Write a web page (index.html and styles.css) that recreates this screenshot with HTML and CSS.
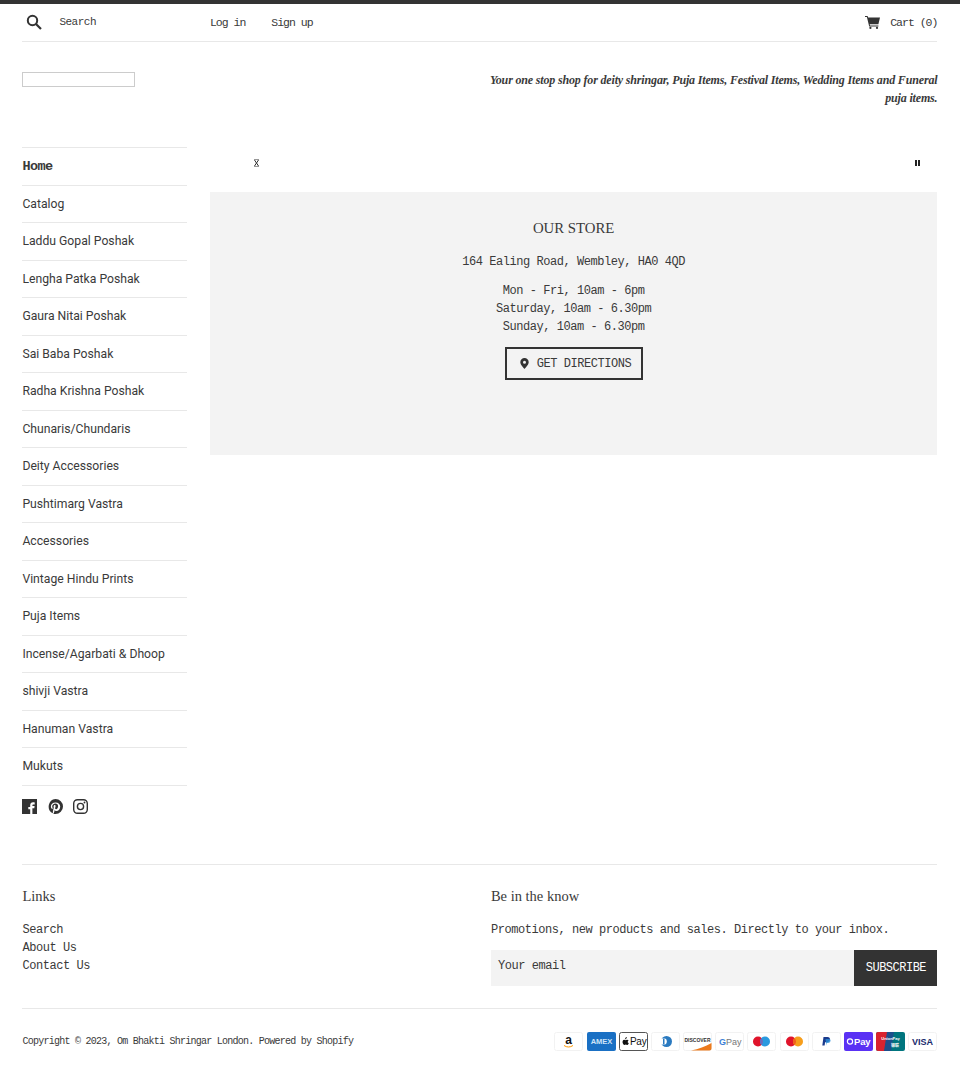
FILE: index.html
```html
<!DOCTYPE html>
<html lang="en">
<head>
    <meta charset="UTF-8">
    <meta name="viewport" content="width=device-width, initial-scale=1.0">
    <title>Om Bhakti Shringar London</title>
    <link rel="stylesheet" href="styles.css">
</head>
<body>
    <div class="page">
        <header class="top-bar">
            <div class="top-search">
                <svg class="icon-search" viewBox="0 0 16 16" width="16" height="16"><circle cx="6.5" cy="6.5" r="4.7" fill="none" stroke="#333" stroke-width="2"/><path d="M10 10l5 5" stroke="#333" stroke-width="2.2" fill="none"/></svg>
                <span class="search-text">Search</span>
            </div>
            <div class="top-account">
                <a href="#">Log in</a>
                <a href="#">Sign up</a>
            </div>
            <a class="top-cart" href="#">
                <svg viewBox="0 0 15 13" width="15" height="13"><path d="M0 0h2.6l.5 1.6H15l-1.6 6.6H4.7l.3 1.2h8.4v1H4.2L1.9 1H0z" fill="#333"/><circle cx="5.4" cy="11.9" r="1.1" fill="#333"/><circle cx="12" cy="11.9" r="1.1" fill="#333"/></svg>
                <span>Cart (0)</span>
            </a>
        </header>

        <div class="brand">
            <div class="logo-box"></div>
            <p class="tagline">Your one stop shop for deity shringar, Puja Items, Festival Items, Wedding Items and Funeral puja items.</p>
        </div>

        <div class="layout">
            <aside class="sidebar">
                <ul class="side-nav">
                    <li class="active"><a href="#">Home</a></li>
                    <li><a href="#">Catalog</a></li>
                    <li><a href="#">Laddu Gopal Poshak</a></li>
                    <li><a href="#">Lengha Patka Poshak</a></li>
                    <li><a href="#">Gaura Nitai Poshak</a></li>
                    <li><a href="#">Sai Baba Poshak</a></li>
                    <li><a href="#">Radha Krishna Poshak</a></li>
                    <li><a href="#">Chunaris/Chundaris</a></li>
                    <li><a href="#">Deity Accessories</a></li>
                    <li><a href="#">Pushtimarg Vastra</a></li>
                    <li><a href="#">Accessories</a></li>
                    <li><a href="#">Vintage Hindu Prints</a></li>
                    <li><a href="#">Puja Items</a></li>
                    <li><a href="#">Incense/Agarbati &amp; Dhoop</a></li>
                    <li><a href="#">shivji Vastra</a></li>
                    <li><a href="#">Hanuman Vastra</a></li>
                    <li><a href="#">Mukuts</a></li>
                </ul>
                <div class="social">
                    <svg viewBox="0 0 15 15" width="15" height="15"><path d="M0 0h15v15h-4.600v-5.800h1.900l.3-2.200h-2.200V6.500c0-.7.2-1.100 1.100-1.100h1.200V3.400c-.2 0-.9-.1-1.700-.1-1.700 0-2.800 1-2.800 2.900V8H6.300v2.200h1.900V15H0z" fill="#333"/></svg>
                    <svg viewBox="0 0 15 15" width="15" height="15"><path fill-rule="evenodd" d="M7.500 0a7.500 7.500 0 1 1 0 15 7.500 7.500 0 0 1-2.200-.3c.3-.5.700-1.200.9-1.800l.5-1.800c.2.500.9 1 1.700 1 2.200 0 3.800-2 3.800-4.500C12.200 5.200 10.300 3.400 7.700 3.400 4.500 3.400 2.900 5.600 2.900 7.400c0 1.100.4 2.100 1.300 2.500.2.100.3 0 .3-.2l.2-.6c0-.2 0-.3-.1-.4-.3-.3-.4-.7-.4-1.300 0-1.600 1.200-3 3.200-3 1.700 0 2.700 1 2.700 2.500 0 1.800-.8 3.400-2 3.400-.7 0-1.200-.6-1-1.200.2-.8.5-1.600.5-2.200 0-.5-.3-.9-.8-.9-.7 0-1.200.7-1.200 1.600 0 .6.200 1 .2 1l-.8 3.500c-.2.700-.1 1.700-.1 2.100A7.500 7.500 0 0 1 7.500 0z" fill="#333"/></svg>
                    <svg viewBox="0 0 15 15" width="15" height="15"><rect x=".7" y=".7" width="13.600" height="13.600" rx="3.800" fill="none" stroke="#333" stroke-width="1.400"/><circle cx="7.500" cy="7.500" r="3.100" fill="none" stroke="#333" stroke-width="1.400"/><circle cx="11.500" cy="3.500" r=".9" fill="#333"/></svg>
                </div>
            </aside>

            <main class="main">
                <div class="slide-controls">
                    <svg viewBox="0 0 5 8" width="5" height="8"><path d="M0 0h5M0 8h5M.5 1l4 6M4.500 1l-4 6" stroke="#333" stroke-width="1" fill="none"/></svg>
                    <svg viewBox="0 0 5 6" width="5" height="6"><path d="M0 0h2v6H0zM3 0h2v6H3z" fill="#222"/></svg>
                </div>
                <section class="store">
                    <h2 class="store-title">OUR STORE</h2>
                    <p class="store-address">164 Ealing Road, Wembley, HA0 4QD</p>
                    <p class="store-hours">Mon - Fri, 10am - 6pm<br>Saturday, 10am - 6.30pm<br>Sunday, 10am - 6.30pm</p>
                    <a class="btn-directions" href="#">
                        <svg viewBox="0 0 9 11" width="9" height="11"><path fill-rule="evenodd" d="M4.500 0A4.200 4.200 0 0 1 8.700 4.200C8.700 6.800 4.500 11 4.500 11S.3 6.800.3 4.200A4.200 4.200 0 0 1 4.500 0zm0 2.700a1.500 1.500 0 1 0 0 3 1.500 1.500 0 0 0 0-3z" fill="#333"/></svg>
                        <span>GET DIRECTIONS</span>
                    </a>
                </section>
            </main>
        </div>

        <footer class="footer">
            <div class="footer-cols">
                <div class="footer-links">
                    <h3>Links</h3>
                    <a href="#">Search</a>
                    <a href="#">About Us</a>
                    <a href="#">Contact Us</a>
                </div>
                <div class="footer-news">
                    <h3>Be in the know</h3>
                    <p>Promotions, new products and sales. Directly to your inbox.</p>
                    <form class="news-form">
                        <div class="news-input">Your email</div>
                        <div class="news-btn">SUBSCRIBE</div>
                    </form>
                </div>
            </div>
            <div class="footer-bottom">
                <span class="copyright">Copyright © 2023, Om Bhakti Shringar London. Powered by Shopify</span>
                <div class="payments">
                    <svg class="pay" viewBox="0 0 29 19"><rect x=".5" y=".5" width="28" height="18" rx="2" fill="#fff" stroke="#f2f2f2"/><text x="14.500" y="11.500" class="pay-a">a</text><path d="M10 13.500c3 2 6 2 9 0" stroke="#f90" stroke-width="1" fill="none"/></svg>
                    <svg class="pay" viewBox="0 0 29 19"><rect width="29" height="19" rx="2" fill="#1a70c4"/><text x="14.500" y="12" class="pay-amex">AMEX</text></svg>
                    <svg class="pay" viewBox="0 0 29 19"><rect x=".5" y=".5" width="28" height="18" rx="2" fill="#fff" stroke="#555"/><text x="11" y="13" class="pay-apple">Pay</text><path d="M7.200 6.700c.5-.6.700-1.200.6-1.700-.6.100-1.100.5-1.400 1-.2.400-.3.900-.2 1.300.4 0 .7-.2 1-.6zM8.700 10.200c0-1 .8-1.500.9-1.600-.5-.7-1.200-.8-1.500-.8-.6-.1-1.200.4-1.500.4s-.8-.4-1.300-.4c-1.500.1-2.300 1.800-1.400 3.800.3.600.8 1.400 1.500 1.400.6 0 .8-.4 1.400-.4s.8.400 1.400.4 1-.7 1.300-1.300l.3-.8c-.1 0-1.100-.4-1.100-.7z" fill="#111"/></svg>
                    <svg class="pay" viewBox="0 0 29 19"><rect x=".5" y=".5" width="28" height="18" rx="2" fill="#fff" stroke="#f2f2f2"/><circle cx="15.500" cy="9.500" r="5.500" fill="#2a7ac0"/><circle cx="12.500" cy="9.500" r="3.300" fill="#fff"/><rect x="12" y="6.500" width="1.500" height="6" fill="#2a7ac0"/></svg>
                    <svg class="pay" viewBox="0 0 29 19"><rect x=".5" y=".5" width="28" height="18" rx="2" fill="#fff" stroke="#f2f2f2"/><path d="M8 18.500c8-1.500 14-4 20.500-7.500v5.500a2 2 0 0 1-2 2z" fill="#ec7a1c"/><text x="14.500" y="9.500" class="pay-disc">DISCOVER</text></svg>
                    <svg class="pay" viewBox="0 0 29 19"><rect x=".5" y=".5" width="28" height="18" rx="2" fill="#fff" stroke="#f2f2f2"/><text x="4" y="12.500" class="pay-g">G</text><text x="11" y="12.500" class="pay-gp">Pay</text></svg>
                    <svg class="pay" viewBox="0 0 29 19"><rect x=".5" y=".5" width="28" height="18" rx="2" fill="#fff" stroke="#f2f2f2"/><circle cx="11" cy="9.500" r="5" fill="#e0142b"/><circle cx="18" cy="9.500" r="5" fill="#2a9adf"/><path d="M14.500 5.900a5 5 0 0 1 0 7.200 5 5 0 0 1 0-7.200z" fill="#6c6bbd"/></svg>
                    <svg class="pay" viewBox="0 0 29 19"><rect x=".5" y=".5" width="28" height="18" rx="2" fill="#fff" stroke="#f2f2f2"/><circle cx="11" cy="9.500" r="5" fill="#e0142b"/><circle cx="18" cy="9.500" r="5" fill="#f79e1b"/><path d="M14.500 5.900a5 5 0 0 1 0 7.200 5 5 0 0 1 0-7.200z" fill="#f0601c"/></svg>
                    <svg class="pay" viewBox="0 0 29 19"><rect x=".5" y=".5" width="28" height="18" rx="2" fill="#fff" stroke="#f2f2f2"/><path d="M11.500 5h4c1.800 0 2.700 1 2.400 2.600-.3 1.700-1.500 2.700-3.300 2.700h-1.500l-.5 3.200h-2.300z" fill="#1b3a8c"/><path d="M13.500 7h3.500c1.200 0 1.700.8 1.500 2-.3 1.300-1.200 2-2.500 2h-1.300l-.4 2.500" fill="#2a8ed8" opacity=".8"/></svg>
                    <svg class="pay" viewBox="0 0 29 19"><rect width="29" height="19" rx="2" fill="#5a31f4"/><text x="10" y="13" class="pay-shop">Pay</text><circle cx="6" cy="9.500" r="2.600" fill="none" stroke="#fff" stroke-width="1.200"/></svg>
                    <svg class="pay" viewBox="0 0 29 19"><rect width="29" height="19" rx="2" fill="#00757e"/><path d="M2 0h10L8.500 19H2a2 2 0 0 1-2-2V2a2 2 0 0 1 2-2z" fill="#d8232f"/><path d="M11 0h7l-3 19H8z" fill="#1c4f8c"/><text x="14.500" y="8" class="pay-up">UnionPay</text><text x="19" y="15" class="pay-up">银联</text></svg>
                    <svg class="pay" viewBox="0 0 29 19"><rect x=".5" y=".5" width="28" height="18" rx="2" fill="#fff" stroke="#f2f2f2"/><text x="14.500" y="13" class="pay-visa">VISA</text></svg>
                </div>
            </div>
        </footer>
    </div>
</body>
</html>
```

FILE: styles.css
```css
* {
    margin: 0;
    padding: 0;
    box-sizing: border-box;
}

body {
    font-family: "Liberation Mono", monospace;
    font-size: 12px;
    letter-spacing: -0.45px;
    line-height: 18px;
    color: #3a3a3a;
    background: #fff;
    border-top: 4px solid #333;
}

a {
    color: inherit;
    text-decoration: none;
}

.page {
    padding: 0 22.6px 0 22.4px;
}

.top-bar {
    display: flex;
    align-items: center;
    height: 38px;
    border-bottom: 1px solid #e8e8e8;
    font-size: 11.5px;
    letter-spacing: -1px;
}

.top-search {
    display: flex;
    align-items: center;
    width: 187.5px;
    padding-left: 4px;
}

.icon-search {
    margin-top: -1px;
}

.search-text {
    margin-left: 17px;
    margin-top: -2px;
    font-size: 11px;
    letter-spacing: -0.5px;
}

.top-account {
    display: flex;
    gap: 26px;
    flex: 1;
}

.top-cart {
    display: flex;
    align-items: center;
    gap: 10px;
}

.brand {
    display: flex;
    justify-content: space-between;
    align-items: flex-start;
    height: 105px;
    padding-top: 29px;
}

.logo-box {
    width: 113px;
    height: 15px;
    margin-top: 1px;
    border: 1px solid #ccc;
}

.tagline {
    width: 460px;
    font-family: "Liberation Serif", serif;
    font-size: 12px;
    font-style: italic;
    font-weight: bold;
    letter-spacing: -0.165px;
    text-align: right;
}

.layout {
    display: grid;
    grid-template-columns: 165px 1fr;
    column-gap: 22.5px;
}

.side-nav {
    list-style: none;
    border-top: 1px solid #e8e8e8;
}

.side-nav li {
    height: 37.5px;
    line-height: 37px;
    border-bottom: 1px solid #e8e8e8;
    font-family: Roboto, sans-serif;
    font-size: 12.2px;
    letter-spacing: 0;
}

.side-nav li.active {
    font-family: "Liberation Mono", monospace;
    font-size: 13.5px;
    font-weight: bold;
    letter-spacing: -0.6px;
}

.social {
    display: flex;
    gap: 10.5px;
    margin-top: 13px;
}

.slide-controls {
    display: flex;
    justify-content: space-between;
    align-items: center;
    height: 45px;
    padding: 0 17px 13px 44px;
}

.store {
    height: 263px;
    padding-top: 27px;
    background: #f3f3f3;
    text-align: center;
}

.store-title {
    font-family: "Liberation Serif", serif;
    font-size: 14.8px;
    font-weight: normal;
    letter-spacing: 0;
    line-height: 18px;
}

.store-address {
    margin-top: 16px;
}

.store-hours {
    margin-top: 11px;
}

.btn-directions {
    display: inline-flex;
    align-items: center;
    gap: 8px;
    width: 138px;
    height: 33px;
    margin-top: 11px;
    padding-left: 13px;
    border: 2px solid #333;
}

.footer {
    margin-top: 50px;
    border-top: 1px solid #e8e8e8;
}

.footer-cols {
    display: grid;
    grid-template-columns: 1fr 446.5px;
    height: 144px;
    padding-top: 22px;
    border-bottom: 1px solid #e8e8e8;
}

.footer h3 {
    margin-bottom: 16px;
    font-family: "Liberation Serif", serif;
    font-size: 14.5px;
    font-weight: normal;
    letter-spacing: 0;
    line-height: 18px;
}

.footer-links a {
    display: block;
}

.news-form {
    display: flex;
    height: 36px;
    margin-top: 11px;
}

.news-input {
    flex: 1;
    padding: 7px;
    background: #f3f3f3;
}

.news-btn {
    width: 83px;
    background: #333;
    color: #fff;
    line-height: 36px;
    text-align: center;
    letter-spacing: -0.5px;
}

.footer-bottom {
    display: flex;
    justify-content: space-between;
    align-items: center;
    height: 64px;
}

.copyright {
    font-size: 10px;
    letter-spacing: -0.75px;
    margin-top: 3px;
}

.payments {
    display: flex;
    gap: 3.2px;
    margin-top: 1px;
}

.pay {
    width: 29px;
    height: 19px;
    display: block;
}

.pay text {
    font-family: "Liberation Sans", "Noto Sans CJK SC", sans-serif;
    letter-spacing: 0;
    text-anchor: middle;
}

.pay .pay-a {
    font-size: 12px;
    font-weight: bold;
    fill: #111;
}

.pay .pay-amex {
    font-size: 7.5px;
    font-weight: bold;
    fill: #cfe4f7;
}

.pay .pay-apple {
    font-size: 10px;
    fill: #111;
    text-anchor: start;
    letter-spacing: -0.3px;
}

.pay .pay-disc {
    font-size: 5px;
    font-weight: bold;
    fill: #333;
}

.pay .pay-g {
    font-size: 9px;
    font-weight: bold;
    fill: #3d80d8;
    text-anchor: start;
}

.pay .pay-gp {
    font-size: 9px;
    fill: #777;
    text-anchor: start;
}

.pay .pay-shop {
    font-size: 9.5px;
    font-weight: bold;
    fill: #fff;
    text-anchor: start;
    letter-spacing: -0.2px;
}

.pay .pay-up {
    font-size: 4px;
    font-weight: bold;
    fill: #fff;
}

.pay .pay-visa {
    font-size: 9px;
    font-weight: bold;
    fill: #1a2a6c;
}
```
